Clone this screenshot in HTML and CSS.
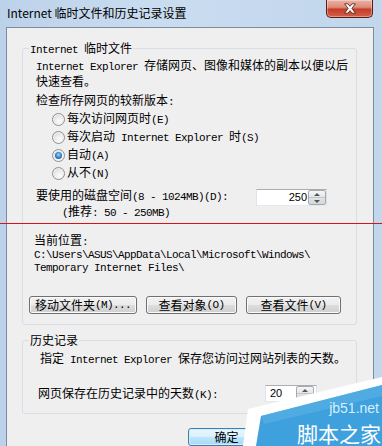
FILE: index.html
```html
<!DOCTYPE html>
<html lang="zh-CN">
<head>
<meta charset="utf-8">
<title>Internet 临时文件和历史记录设置</title>
<link rel="stylesheet" href="styles.css">
</head>
<body>
<div class="window">
  <div class="titlebar">
    <span class="title">Internet 临时文件和历史记录设置</span>
    <div class="close">
      <svg width="14" height="11" viewBox="0 0 14 11"><path d="M1.6 0.8 L5 0.8 L7 3.3 L9 0.8 L12.4 0.8 L8.9 5.4 L12.4 10.2 L9 10.2 L7 7.6 L5 10.2 L1.6 10.2 L5.1 5.4 Z" fill="#fff" stroke="#4a1a14" stroke-width="0.8" stroke-linejoin="round"/></svg>
    </div>
  </div>
  <div class="client">
    <fieldset class="group g1">
      <legend><span class="en">Internet </span>临时文件</legend>
      <p class="desc"><span class="en">Internet Explorer </span>存储网页、图像和媒体的副本以便以后<br>快速查看。</p>
      <p class="check">检查所存网页的较新版本<span class="en">:</span></p>
      <div class="radios">
        <div class="radio-row"><span class="radio"></span><span>每次访问网页时<span class="en">(E)</span></span></div>
        <div class="radio-row"><span class="radio"></span><span>每次启动<span class="en"> Internet Explorer </span>时<span class="en">(S)</span></span></div>
        <div class="radio-row"><span class="radio on"></span><span>自动<span class="en">(A)</span></span></div>
        <div class="radio-row"><span class="radio"></span><span>从不<span class="en">(N)</span></span></div>
      </div>
      <div class="disk">
        <div>
          <div>要使用的磁盘空间<span class="en">(8 - 1024MB)(D):</span></div>
          <div class="sub"><span class="en">(</span>推荐<span class="en">: 50 - 250MB)</span></div>
        </div>
        <div class="spin s250">
          <span class="val">250</span>
          <span class="arrows"><span class="up"></span><span class="down"></span></span>
        </div>
      </div>
      <div class="loc">
        <div>当前位置<span class="en">:</span></div>
        <div class="en">C:\Users\ASUS\AppData\Local\Microsoft\Windows\</div>
        <div class="en">Temporary Internet Files\</div>
      </div>
      <div class="btns">
        <button class="btn b1">移动文件夹<span class="en">(M)...</span></button>
        <button class="btn b2">查看对象<span class="en">(O)</span></button>
        <button class="btn b3">查看文件<span class="en">(V)</span></button>
      </div>
    </fieldset>
    <fieldset class="group g2">
      <legend>历史记录</legend>
      <p class="hdesc">指定<span class="en"> Internet Explorer </span>保存您访问过网站列表的天数。</p>
      <div class="days">
        <span>网页保存在历史记录中的天数<span class="en">(K):</span></span>
        <div class="spin s20">
          <span class="val">20</span>
          <span class="arrows"><span class="up"></span><span class="down"></span></span>
        </div>
      </div>
    </fieldset>
    <div class="actions">
      <button class="btn ok">确定</button>
    </div>
  </div>
  <div class="mark"></div>
  <div class="watermark">
    <svg class="wm-shape" width="140" height="70" viewBox="0 0 140 70">
      <polygon points="1,70 6,33 140,1 140,70" fill="#ffffff"/>
      <polygon points="14,70 19,40 140,9 140,70" fill="#3ea1dd"/>
      <polygon points="19,40 140,9 140,20 22,48" fill="#5db3e6" opacity="0.6"/>
    </svg>
    <span class="wm-en">jb51.net</span>
    <span class="wm-cn">脚本之家</span>
  </div>
</div>
</body>
</html>
```
FILE: styles.css
```css
* { box-sizing: border-box; }
html, body { margin: 0; padding: 0; }
body {
  width: 382px;
  height: 446px;
  overflow: hidden;
  font-family: "Noto Sans CJK SC", sans-serif;
  font-size: 12px;
  color: #000;
}
p { margin: 0; }
.en {
  font-family: "Liberation Mono", monospace;
  font-size: 11px;
  letter-spacing: -0.6px;
}
.window {
  position: relative;
  width: 382px;
  height: 446px;
  display: flex;
  flex-direction: column;
  background: linear-gradient(90deg, #bcd2ea 0, #c9dcf0 40%, #c2d6ec 100%);
}
.titlebar {
  flex: none;
  height: 27px;
  display: flex;
  align-items: flex-start;
  padding-left: 7px;
}
.title {
  line-height: 26px;
  font-size: 12px;
  color: #000;
}
.close {
  margin-left: auto;
  margin-right: 9px;
  width: 47px;
  height: 18px;
  border: 1px solid #5a1e16;
  border-top: none;
  border-radius: 0 0 5px 5px;
  background: linear-gradient(180deg, #eab2a4 0, #dd8c7b 42%, #c63d28 55%, #d2604a 100%);
  box-shadow: inset 0 0 0 1px rgba(255, 255, 255, 0.35);
  display: flex;
  align-items: center;
  justify-content: center;
}
.client {
  flex: 1;
  margin: 0 8px 6px 6px;
  border: 1px solid #7d8b9b;
  background: #f0eff0;
  display: flex;
  flex-direction: column;
}
.group {
  margin: 0 16px 0 15px;
  padding: 0;
  border: 1px solid #d5dfe5;
  border-radius: 3px;
  min-width: 0;
}
.group legend {
  margin-left: 6px;
  padding: 0 1px;
  line-height: 14px;
  height: 14px;
}
.g1 { margin-top: 13px; padding-bottom: 10px; }
.desc { margin: 3px 0 0 13px; line-height: 13px; }
.check { margin: 6px 0 0 13px; line-height: 13px; }
.radios { margin: 1px 0 0 29px; }
.radio-row {
  height: 18px;
  display: flex;
  align-items: center;
  gap: 2px;
  line-height: 13px;
}
.radio {
  flex: none;
  width: 13px;
  height: 13px;
  border-radius: 50%;
  border: 1px solid #8f9094;
  background: radial-gradient(circle at 62% 68%, #fdfdfd 0, #ebebeb 45%, #cdcdcd 100%);
  box-shadow: inset 0 0 0 1px #f4f4f4;
  display: flex;
  align-items: center;
  justify-content: center;
}
.radio.on::after {
  content: "";
  width: 7px;
  height: 7px;
  border-radius: 50%;
  background: radial-gradient(circle at 50% 40%, #9fd6f7 0, #3a8fd0 45%, #103f70 100%);
}
.disk {
  margin: 6px 29px 0 13px;
  display: flex;
  justify-content: space-between;
  align-items: flex-start;
  line-height: 13px;
}
.disk .sub { padding-left: 26px; }
.spin {
  height: 17px;
  border: 1px solid #abadb3;
  border-left-color: #e2e3ea;
  border-right-color: #dbdfe6;
  border-bottom-color: #e3e9ef;
  background: #fff;
  display: flex;
  align-items: stretch;
}
.spin .val {
  flex: 1;
  font-family: "Liberation Sans", sans-serif;
  font-size: 11px;
  line-height: 15px;
}
.s250 { width: 71px; margin-top: 1px; }
.s250 .val { text-align: right; padding-right: 1px; }
.s20 { width: 52px; }
.s20 .val { text-align: left; padding-left: 4px; }
.s20 .arrows { margin-right: 2px; }
.arrows {
  flex: none;
  width: 18px;
  display: flex;
  flex-direction: column;
  border: 1px solid #a6abb1;
  border-radius: 2px;
  background: linear-gradient(180deg, #f6f6f6 0, #e4e4e4 50%, #d6d6d6 100%);
}
.arrows .up, .arrows .down {
  flex: 1;
  display: flex;
  align-items: center;
  justify-content: center;
}
.arrows .up { border-bottom: 1px solid #c3c7cc; }
.arrows .up::before {
  content: "";
  border-left: 3px solid transparent;
  border-right: 3px solid transparent;
  border-bottom: 3px solid #4c5763;
}
.arrows .down::before {
  content: "";
  border-left: 3px solid transparent;
  border-right: 3px solid transparent;
  border-top: 3px solid #4c5763;
}
.loc { margin: 13px 0 0 11px; line-height: 13px; }
.btns { margin: 21px 0 0 6px; display: flex; gap: 9px; }
.btn {
  height: 18px;
  padding: 0;
  font-family: "Noto Sans CJK SC", sans-serif;
  font-size: 12px;
  line-height: 14px;
  color: #000;
  border: 1px solid #707070;
  border-radius: 3px;
  background: linear-gradient(180deg, #f2f2f2 0, #ebebeb 50%, #dddddd 50%, #cfcfcf 100%);
  box-shadow: inset 0 0 0 1px #fbfbfb;
  display: flex;
  align-items: center;
  justify-content: center;
}
.b1 { width: 108px; }
.b2 { width: 91px; }
.b3 { width: 95px; }
.g2 { margin-top: 8px; padding-bottom: 11px; }
.hdesc { margin: 4px 0 0 17px; line-height: 13px; }
.days {
  margin: 18px 39px 0 15px;
  height: 17px;
  display: flex;
  justify-content: space-between;
  align-items: center;
  line-height: 13px;
}
.actions { margin-top: 14px; padding-left: 181px; display: flex; }
.btn.ok {
  width: 77px;
  border-color: #3c7fb1;
  background: linear-gradient(180deg, #eaf6fd 0, #d9f0fc 50%, #bee6fd 50%, #a7d9f5 100%);
  box-shadow: inset 0 0 0 1px #d6ecf9;
}
.mark {
  position: absolute;
  left: 0;
  right: 0;
  top: 223px;
  height: 1px;
  background: #d2141e;
}
.watermark {
  position: absolute;
  right: 0;
  bottom: 0;
  width: 140px;
  height: 70px;
}
.wm-shape { position: absolute; left: 0; top: 0; }
.wm-en {
  position: absolute;
  right: 3px;
  top: 24px;
  font-family: "Liberation Sans", sans-serif;
  font-size: 14px;
  line-height: 16px;
  color: #d6eefc;
}
.wm-cn {
  position: absolute;
  right: 1px;
  bottom: 0;
  font-size: 21px;
  line-height: 26px;
  color: #fff;
}
```
